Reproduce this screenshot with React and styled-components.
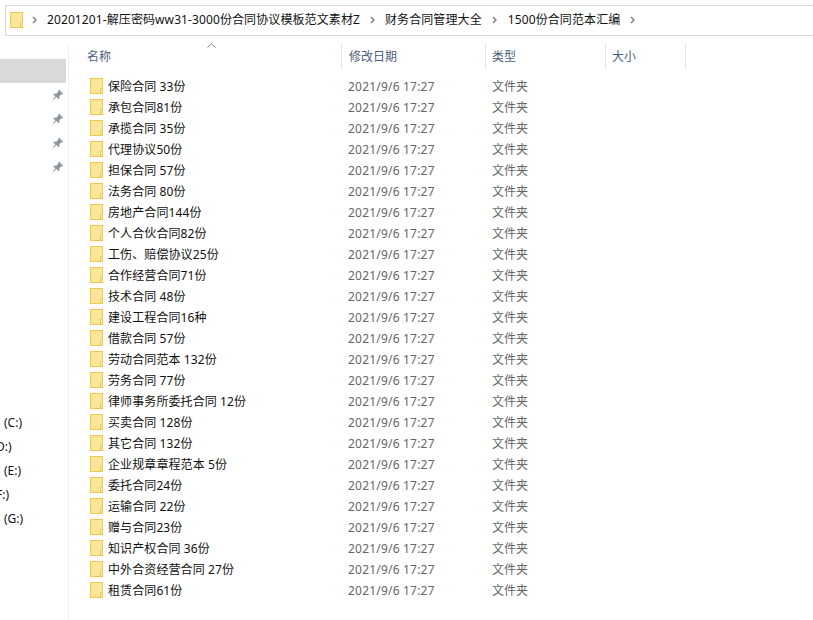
import React from 'react';
import styled, { createGlobalStyle } from 'styled-components';

const GlobalStyle = createGlobalStyle`
  html, body {
    margin: 0;
    padding: 0;
    background: #fff;
    overflow: hidden;
  }
  body {
    font-family: "Noto Sans", "Noto Sans CJK SC", sans-serif;
    font-size: 12px;
  }
`;

const Window = styled.div`
  width: 813px;
  height: 620px;
  overflow: hidden;
  display: flex;
  flex-direction: column;
`;

const AddressBar = styled.div`
  margin: 5px 0 0 5px;
  padding: 0 0 1px 4px;
  height: 28px;
  border: 1px solid #d9d9d9;
  border-right: none;
  display: flex;
  align-items: center;
  color: #111;
`;

const Crumb = styled.span`
  line-height: 16px;
  white-space: nowrap;
  letter-spacing: 0.1px;
`;

const Chevron = styled.svg`
  width: 5px;
  height: 8px;
  flex: none;
  margin: ${props => props.$margin};
`;

const Body = styled.div`
  flex: 1;
  display: flex;
  margin-top: 7px;
  min-height: 0;
`;

const Sidebar = styled.nav`
  width: 69px;
  flex: none;
  box-sizing: border-box;
  border-right: 1px solid #f0f0f0;
  padding-top: 16px;
  overflow: hidden;
`;

const NavRow = styled.div`
  width: 66px;
  height: 24px;
  display: flex;
  align-items: center;
  justify-content: flex-end;
  padding-right: 2px;
  box-sizing: border-box;
  background: ${props => (props.$selected ? '#d9d9d9' : 'transparent')};
`;

const Pin = styled.svg`
  width: 12px;
  height: 12px;
`;

const DriveList = styled.div`
  margin-top: 232px;
`;

const DriveRow = styled.div`
  height: 24px;
  line-height: 24px;
  /* the labels with a cut-off start run past the left edge of the pane */
  text-indent: ${props => (props.$clipped ? '-4px' : '4px')};
  color: #111;
  white-space: nowrap;
`;

const Content = styled.main`
  flex: 1;
  min-width: 0;
`;

const Header = styled.div`
  height: 27px;
  display: flex;
  position: relative;
`;

const HeaderCell = styled.div`
  width: ${props => props.$width}px;
  flex: none;
  box-sizing: border-box;
  padding-left: ${props => props.$pad}px;
  border-right: 1px solid #e5e5e5;
  line-height: 28px;
  color: #4c607a;
`;

const SortCaret = styled.svg`
  position: absolute;
  left: 138px;
  top: 0;
  width: 9px;
  height: 5px;
`;

const List = styled.div`
  padding-top: 6px;
`;

const Row = styled.div`
  height: 21px;
  display: flex;
  align-items: center;
  line-height: 17px;
`;

const NameCell = styled.div`
  width: 272px;
  flex: none;
  display: flex;
  align-items: flex-start;
  padding-left: 21px;
  box-sizing: border-box;
  color: #111;
  white-space: nowrap;
  letter-spacing: 0.1px;
`;

const FolderIcon = styled.svg`
  width: 14px;
  height: 16px;
  flex: none;
  margin-right: 4px;
`;

const MetaCell = styled.div`
  width: ${props => props.$width}px;
  flex: none;
  box-sizing: border-box;
  padding-left: 7px;
  color: #666;
  white-space: nowrap;
  letter-spacing: ${props => props.$spacing || 0}px;
`;

const folders = [
  '保险合同 33份',
  '承包合同81份',
  '承揽合同 35份',
  '代理协议50份',
  '担保合同 57份',
  '法务合同 80份',
  '房地产合同144份',
  '个人合伙合同82份',
  '工伤、赔偿协议25份',
  '合作经营合同71份',
  '技术合同 48份',
  '建设工程合同16种',
  '借款合同 57份',
  '劳动合同范本 132份',
  '劳务合同 77份',
  '律师事务所委托合同 12份',
  '买卖合同 128份',
  '其它合同 132份',
  '企业规章章程范本 5份',
  '委托合同24份',
  '运输合同 22份',
  '赠与合同23份',
  '知识产权合同 36份',
  '中外合资经营合同 27份',
  '租赁合同61份',
];

const drives = [
  { label: '(C:)' },
  { label: 'D:)', clipped: true },
  { label: '(E:)' },
  { label: 'F:)', clipped: true },
  { label: '(G:)' },
];

const Folder = () => (
  <FolderIcon viewBox="0 0 14 16">
    <rect x="0.5" y="0.5" width="12" height="15" fill="#fde69a" stroke="#eec84f" />
    <path d="M10.500 15.500V10.500H12.500" fill="#fff3c4" stroke="#eec84f" />
  </FolderIcon>
);

const Sep = ({ margin }) => (
  <Chevron viewBox="0 0 5 8" $margin={margin}>
    <path d="M1 1l3 3-3 3" fill="none" stroke="#7a7a7a" strokeWidth="1.4" />
  </Chevron>
);

const PinGlyph = () => (
  <Pin viewBox="0 0 12 12">
    <path
      d="M7.200 0.800l4 4-1 .7-.8-.2-2 2 .1 2-.9.9-2.100-2.100L1.200 11.200 0.800 10.800 3.300 7.500 1.300 5.500l.9-.9 2 .1 2-2-.2-.8z"
      fill="#8f979f"
    />
  </Pin>
);

const App = () => (
  <Window>
    <GlobalStyle />
    <AddressBar>
      <Folder />
      <Sep margin="0 10px 0 4px" />
      <Crumb>20201201-解压密码ww31-3000份合同协议模板范文素材Z</Crumb>
      <Sep margin="0 10px 0 10px" />
      <Crumb>财务合同管理大全</Crumb>
      <Sep margin="0 11px 0 10px" />
      <Crumb>1500份合同范本汇编</Crumb>
      <Sep margin="0 0 0 10px" />
    </AddressBar>
    <Body>
      <Sidebar>
        <NavRow $selected />
        {[0, 1, 2, 3].map(i => (
          <NavRow key={i}>
            <PinGlyph />
          </NavRow>
        ))}
        <DriveList>
          {drives.map(d => (
            <DriveRow key={d.label} $clipped={d.clipped}>
              {d.label}
            </DriveRow>
          ))}
        </DriveList>
      </Sidebar>
      <Content>
        <Header>
          <SortCaret viewBox="0 0 9 5">
            <path d="M0.500 4.500L4.500 0.800 8.500 4.500" fill="none" stroke="#8a8a8a" />
          </SortCaret>
          <HeaderCell $width={273} $pad={18}>名称</HeaderCell>
          <HeaderCell $width={144} $pad={7}>修改日期</HeaderCell>
          <HeaderCell $width={120} $pad={6}>类型</HeaderCell>
          <HeaderCell $width={80} $pad={6}>大小</HeaderCell>
        </Header>
        <List>
          {folders.map(name => (
            <Row key={name}>
              <NameCell>
                <Folder />
                {name}
              </NameCell>
              <MetaCell $width={144} $spacing={0.2}>2021/9/6 17:27</MetaCell>
              <MetaCell $width={120}>文件夹</MetaCell>
            </Row>
          ))}
        </List>
      </Content>
    </Body>
  </Window>
);

export default App;
